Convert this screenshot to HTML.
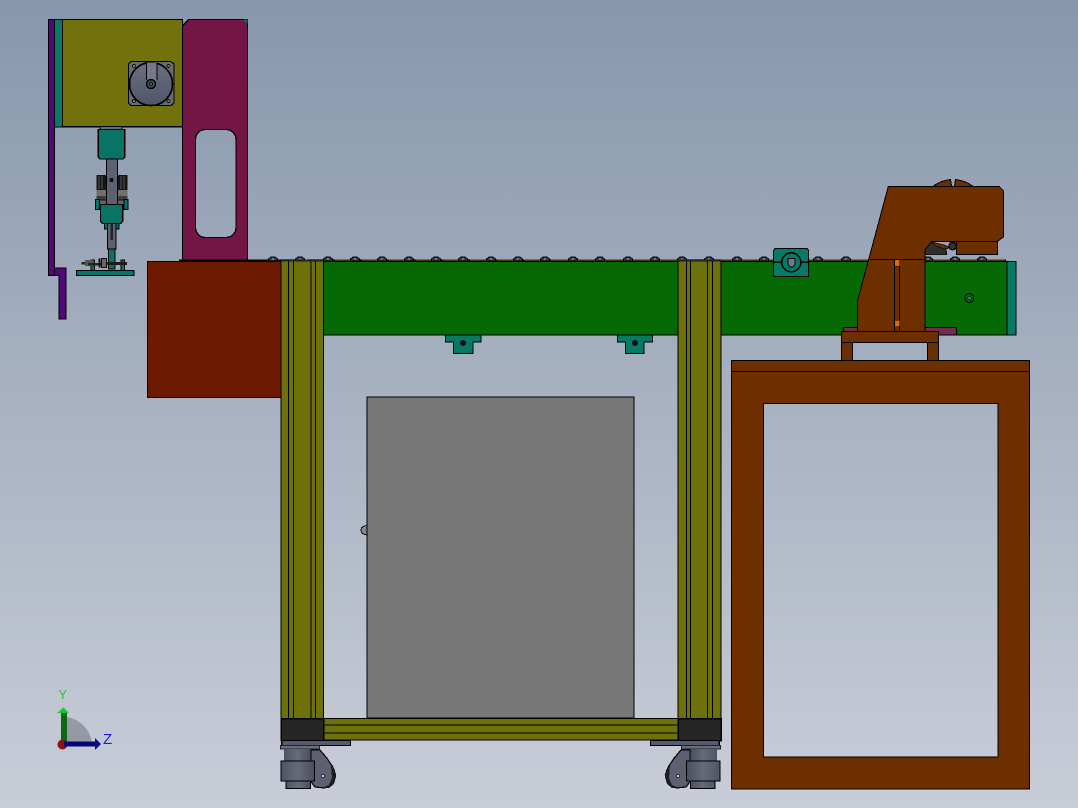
<!DOCTYPE html>
<html><head><meta charset="utf-8"><style>
html,body{margin:0;padding:0;width:1078px;height:808px;overflow:hidden;background:#a5aec0}
svg{display:block}
</style></head><body>
<svg width="1078" height="808" viewBox="0 0 1078 808" xmlns="http://www.w3.org/2000/svg" stroke-linejoin="miter" shape-rendering="crispEdges">
<defs>
<linearGradient id="bg" gradientUnits="userSpaceOnUse" x1="0" y1="0" x2="0" y2="808"><stop offset="0" stop-color="#8797ac"/><stop offset="1" stop-color="#c9cdd8"/></linearGradient>
<linearGradient id="gr" x1="0" y1="0" x2="0" y2="1"><stop offset="0" stop-color="#6a6f80"/><stop offset="1" stop-color="#50556a"/></linearGradient>
<linearGradient id="cb" x1="0" y1="0" x2="1" y2="0"><stop offset="0" stop-color="#4f5464"/><stop offset="0.5" stop-color="#666b7b"/><stop offset="1" stop-color="#4a4e5c"/></linearGradient>
<g id="b"><path d="M-4.500 261V259L-2 257H2L4.500 259V261Z" fill="#3c3e4a" stroke="#000" stroke-width="1"/><rect x="-1" y="258" width="2" height="2" fill="#777"/></g>
<g id="caster">
<rect x="281.700" y="740.500" width="68.800" height="5" fill="#575c6c" stroke="#000" stroke-width="1.200"/>
<rect x="280.500" y="745.500" width="39" height="3.500" fill="#6a6e7c" stroke="#222" stroke-width="0.800"/>
<path d="M310.700 750H320L326.700 758L332.700 766.700L335.700 775L333 783L325 788L315 787L311 781.700Z" fill="#5c6070" stroke="#000" stroke-width="1.200"/>
<path d="M331 765L335 770L336 777L334 784L329 788L321 788L329 785L332 778Z" fill="#1c1c22"/>
<circle cx="323" cy="776" r="1.700" fill="#c8ccd6" stroke="#000" stroke-width="0.800"/>
<rect x="284" y="749" width="26.700" height="12" fill="url(#cb)"/>
<rect x="286" y="781" width="24.700" height="7.700" fill="url(#cb)" stroke="#000" stroke-width="1"/>
<rect x="281" y="761" width="33.700" height="20" fill="url(#cb)" stroke="#000" stroke-width="1"/>
</g>
</defs>
<rect width="1078" height="808" fill="url(#bg)"/>

<!-- top-left motor assembly -->
<path d="M48.500 19.500H54.500V268H66V319H59V275.500H48.500Z" fill="#52087a" stroke="#000" stroke-width="1.300"/>
<line x1="54.500" y1="268" x2="54.500" y2="275" stroke="#000"/>
<rect x="54.500" y="19.500" width="8" height="107.300" fill="#077a66" stroke="#000" stroke-width="1"/>
<rect x="62.500" y="19.500" width="120" height="107.300" fill="#72710b" stroke="#000" stroke-width="1.300"/>
<path d="M182.500 26L188.500 19.500H247.500V261.500H182.500Z" fill="#741645" stroke="#000" stroke-width="1.300"/>
<path d="M243 19.500H247.500V24Z" fill="#077a66"/>
<rect x="195.500" y="129.500" width="40.500" height="108" rx="10" fill="url(#bg)" stroke="#000" stroke-width="1.300"/>

<path d="M131 61.500H171L174 64V103L171 105.500H131L128.500 103V64Z" fill="#666b7c" stroke="#000" stroke-width="1.200"/>
<circle cx="151" cy="84" r="21.500" fill="url(#gr)" stroke="#000" stroke-width="1.600"/>
<rect x="147" y="62.500" width="9.500" height="18" fill="#75798a"/>
<path d="M146.500 62.500V80M157 62.500V80" stroke="#000" stroke-width="1.200" fill="none"/>
<circle cx="151" cy="84" r="4.500" fill="#555a68" stroke="#000" stroke-width="1.500"/>
<circle cx="151" cy="84" r="1.800" fill="none" stroke="#000" stroke-width="1"/>
<circle cx="134" cy="66" r="1.500" fill="#8a8a10" stroke="#000" stroke-width="0.700"/>
<circle cx="168.500" cy="66" r="1.500" fill="#8a8a10" stroke="#000" stroke-width="0.700"/>
<circle cx="134" cy="101" r="1.500" fill="#8a8a10" stroke="#000" stroke-width="0.700"/>
<circle cx="168.500" cy="101" r="1.500" fill="#8a8a10" stroke="#000" stroke-width="0.700"/>

<!-- tool head -->
<rect x="100" y="126.800" width="22" height="3" fill="#666b7a" stroke="#000" stroke-width="0.800"/>
<path d="M98.300 129.500H124.700V157L123 159H100L98.300 157Z" fill="#077466" stroke="#000" stroke-width="1.200"/>
<rect x="96.500" y="175" width="31" height="15" fill="#161616"/>
<path d="M99 176V189M102 176V189M121 176V189M124 176V189" stroke="#555" stroke-width="1"/>
<rect x="96.500" y="190" width="31" height="6" fill="#707070"/>
<rect x="96.500" y="196" width="31" height="4" fill="#3c3c3c"/>
<rect x="97" y="200" width="29" height="5" fill="#666" stroke="#111" stroke-width="0.700"/>
<rect x="95.500" y="199.500" width="4" height="10" fill="#077466" stroke="#000" stroke-width="0.800"/>
<rect x="124" y="199.500" width="4" height="10" fill="#077466" stroke="#000" stroke-width="0.800"/>
<rect x="106.500" y="159" width="11" height="46" fill="#5d6172" stroke="#000" stroke-width="1"/>
<circle cx="111.500" cy="180" r="2.200" fill="#111"/>
<path d="M100.500 204.500H122.800V221L120.800 223.500H102.500L100.500 221Z" fill="#077466" stroke="#000" stroke-width="1.200"/>
<rect x="104.500" y="223.500" width="4" height="5.500" fill="#077466" stroke="#000" stroke-width="0.800"/>
<rect x="115" y="223.500" width="4" height="5.500" fill="#077466" stroke="#000" stroke-width="0.800"/>
<rect x="107.500" y="223.500" width="8.500" height="25.500" fill="#5d6172" stroke="#000" stroke-width="1"/>
<rect x="110.500" y="224" width="2.500" height="16" fill="#222"/>
<rect x="108.500" y="249" width="6.500" height="20" fill="#077466" stroke="#000" stroke-width="1"/>
<rect x="91" y="260" width="3.500" height="11" fill="#077466" stroke="#000" stroke-width="0.700"/>
<rect x="121" y="260" width="3.500" height="11" fill="#077466" stroke="#000" stroke-width="0.700"/>
<rect x="81.500" y="262" width="5" height="2.500" fill="#222"/>
<rect x="85" y="260" width="8" height="6" fill="#555"/>
<rect x="88" y="263" width="16" height="2.500" fill="#222"/>
<rect x="98.500" y="258.500" width="2" height="9" fill="#111"/>
<rect x="101.500" y="258.500" width="5" height="9" fill="#666" stroke="#111" stroke-width="0.800"/>
<rect x="106" y="262" width="21" height="3" fill="#1c1c1c"/>
<rect x="76.500" y="270.500" width="57.500" height="5" fill="#077466" stroke="#000" stroke-width="1.100"/>

<!-- red block -->
<rect x="147.500" y="261.500" width="133.500" height="136" fill="#6e1a00" stroke="#000" stroke-width="1"/>

<!-- chain -->
<line x1="179" y1="260.500" x2="1006" y2="260.500" stroke="#000" stroke-width="2"/>
<line x1="281" y1="259.500" x2="1006" y2="259.500" stroke="#8b6a1c" stroke-width="1.500" stroke-dasharray="22 5"/>
<use href="#b" x="273"/><use href="#b" x="300"/><use href="#b" x="328"/><use href="#b" x="355"/><use href="#b" x="382"/><use href="#b" x="409"/><use href="#b" x="436"/><use href="#b" x="463"/><use href="#b" x="491"/><use href="#b" x="518"/><use href="#b" x="545"/><use href="#b" x="573"/><use href="#b" x="600"/><use href="#b" x="628"/><use href="#b" x="655"/><use href="#b" x="682"/><use href="#b" x="709"/><use href="#b" x="737"/><use href="#b" x="764"/><use href="#b" x="818"/><use href="#b" x="846"/><use href="#b" x="928"/><use href="#b" x="955"/><use href="#b" x="982"/>

<!-- conveyor -->
<rect x="323" y="261.500" width="684" height="73.500" fill="#056a05" stroke="#000" stroke-width="1"/>
<rect x="1007" y="261.500" width="9" height="73.500" fill="#077a66" stroke="#000" stroke-width="0.800"/>

<!-- T blocks -->
<path d="M445.700 335H481V342H473V353.500H453.500V342H445.700Z" fill="#077a66" stroke="#000" stroke-width="1"/>
<circle cx="463" cy="343" r="3" fill="#111"/>
<path d="M617.300 335H652.700V342H644V353.500H625.500V342H617.300Z" fill="#077a66" stroke="#000" stroke-width="1"/>
<circle cx="635" cy="343" r="3" fill="#111"/>

<!-- columns -->
<g fill="#6e700a" stroke="#000" stroke-width="1.200">
<rect x="281" y="261" width="42.500" height="457.500"/>
<rect x="678" y="261" width="43" height="457.500"/>
<rect x="323" y="718.500" width="355" height="21.500"/>
</g>
<path d="M288.500 261V718M293.500 261V718M311 261V718M315.500 261V718M686.500 261V718M690.500 261V718M707.500 261V718M712.500 261V718M323 725H678M323 733H678" stroke="#000" stroke-width="1" fill="none"/>
<line x1="281" y1="260.500" x2="323" y2="260.500" stroke="#222" stroke-width="2"/>
<line x1="678" y1="260.500" x2="721" y2="260.500" stroke="#222" stroke-width="2"/>

<!-- grey cabinet -->
<path d="M367 525.500C362 526 361 528 361 530C361 532 362 534.500 367 535Z" fill="#85878c" stroke="#000" stroke-width="0.800"/>
<rect x="367" y="397" width="267" height="321" fill="#787878" stroke="#000" stroke-width="1.200"/>

<!-- black corner blocks -->
<rect x="281" y="718.500" width="42.500" height="22" fill="#262626" stroke="#000" stroke-width="1.500"/>
<rect x="678" y="718.500" width="43" height="22" fill="#262626" stroke="#000" stroke-width="1.500"/>

<!-- casters -->
<use href="#caster"/>
<use href="#caster" transform="translate(1001,0) scale(-1,1)"/>

<!-- brown table -->
<path fill-rule="evenodd" d="M731.500 360.500H1029.500V789H731.500ZM763.500 403.500V757H998V403.500Z" fill="#6e2f00" stroke="#000" stroke-width="1.200"/>
<line x1="731.500" y1="371.500" x2="1029.500" y2="371.500" stroke="#000" stroke-width="1"/>

<!-- pillow block and screw -->
<path d="M775 248.500H807L808.700 250.500V276.500H773.500V250.500Z" fill="#077a66" stroke="#000" stroke-width="1"/>
<line x1="773.500" y1="262.300" x2="808.700" y2="262.300" stroke="#000" stroke-width="1.300"/>
<circle cx="791.300" cy="262.300" r="9.500" fill="#077a66" stroke="#000" stroke-width="1.500"/>
<path d="M788 258.500H795V264L793 267H790L788 264Z" fill="#767a88" stroke="#000" stroke-width="0.800"/>
<circle cx="969.300" cy="298" r="4.500" fill="#056a05" stroke="#000" stroke-width="1"/>
<circle cx="969.300" cy="298" r="2" fill="#0a8a70" stroke="#000" stroke-width="0.600"/>

<!-- brown machine -->
<rect x="843.300" y="327.500" width="113.400" height="7.500" fill="#722a50" stroke="#000" stroke-width="1"/>
<path d="M933 186.500C937 183 943 180.500 950.500 179.500L951.700 186.500Z" fill="#6e2f00" stroke="#000" stroke-width="1"/>
<path d="M973 186.500C969 183 963 180.500 955.500 179.500L954.500 186.500Z" fill="#6e2f00" stroke="#000" stroke-width="1"/>
<path d="M925 250L930.500 242.500L946 248L946.700 254.700H925Z" fill="#2e2e2e" stroke="#000" stroke-width="0.800"/>
<path d="M932 242L944 245L950 248L944 249L936 246Z" fill="#6e2f00" stroke="#000" stroke-width="0.700"/>
<circle cx="952.700" cy="246" r="3.800" fill="#333" stroke="#000" stroke-width="1.300"/>
<rect x="956.700" y="241.300" width="41" height="13" fill="#6e2f00" stroke="#000" stroke-width="1"/>
<path d="M888.300 186.500H999.300L1003.700 191V236.700L997.700 241.300H931.700L925 250V331.300H857.300V301.700Z" fill="#6e2f00" stroke="#000" stroke-width="1"/>
<line x1="870" y1="259.300" x2="924.500" y2="259.300" stroke="#000" stroke-width="1"/>
<rect x="894.500" y="259.500" width="5" height="71.800" fill="#6e2f00" stroke="#000" stroke-width="0.900"/>
<rect x="894.500" y="259.500" width="5" height="6.500" fill="#e06a08" stroke="#000" stroke-width="0.500"/>
<rect x="894.500" y="320" width="5" height="6.500" fill="#e06a08" stroke="#000" stroke-width="0.500"/>
<g fill="#6e2f00" stroke="#000" stroke-width="1">
<rect x="841.500" y="331.500" width="97" height="11"/>
<rect x="841.500" y="342.500" width="11.200" height="18"/>
<rect x="927.300" y="342.500" width="11.200" height="18"/>
</g>

<!-- triad -->
<g shape-rendering="auto">
<path d="M62 745V716.500C78 716.500 92 730 92 745Z" fill="#9699a3"/>
<rect x="61" y="712" width="6" height="33" fill="#0a6a14"/>
<path d="M57 713L63.500 707.500L69 713Z" fill="#18c82c"/>
<circle cx="62.500" cy="744.500" r="5" fill="#8c1414"/>
<rect x="64" y="741.500" width="32" height="5" fill="#06067a"/>
<path d="M95 738L101 744L95 750Z" fill="#0a0a98"/>
<text x="58.500" y="699" font-family="'Liberation Sans',sans-serif" font-size="13" fill="#28c83c">Y</text>
<text x="103" y="744" font-family="'Liberation Sans',sans-serif" font-size="15" fill="#1a1ae0">Z</text>
</g>
</svg>
</body></html>
